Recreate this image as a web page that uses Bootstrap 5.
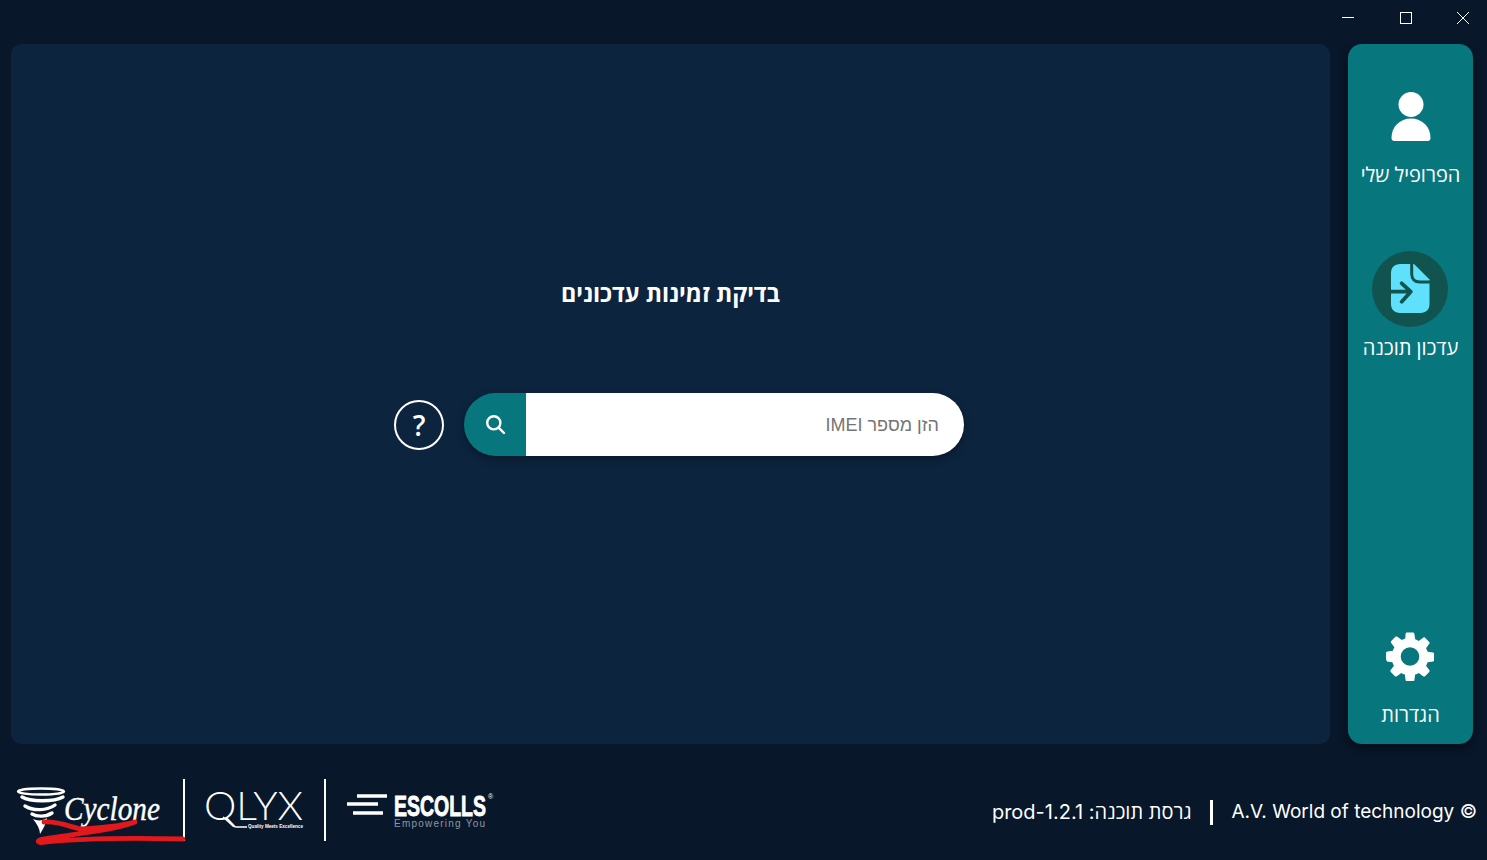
<!DOCTYPE html>
<html lang="he">
<head>
    <meta charset="UTF-8">
    <meta name="viewport" content="width=device-width, initial-scale=1.0">
    <title>Update check</title>
    <link href="https://cdn.jsdelivr.net/npm/bootstrap@5.3.0/dist/css/bootstrap.min.css" rel="stylesheet">
    <style>
        body {
            background-color: #08172a;
            color: #fff;
            font-family: "Open Sans", "Noto Sans", sans-serif;
            overflow: hidden;
        }
        .app-shell { height: 860px; }

        /* window controls */
        .title-bar { height: 44px; padding-right: 1px; gap: 11.5px; }
        .win-btn { width: 46px; height: 36px; }

        /* main area */
        .work-area { height: 700px; padding: 0 14px 0 11px; gap: 18px; }
        .main-panel {
            flex: 1;
            background-color: #0d243f;
            border-radius: 10px;
            padding-top: 234px;
        }
        .panel-title { font-size: 23.3px; font-weight: 700; line-height: 30px; margin-bottom: 85px; }
        .search-row { gap: 20px; margin-left: 17px; }
        .help-btn {
            width: 50px;
            height: 50px;
            border: 2px solid #fff;
            border-radius: 50%;
            font-size: 28px;
            font-weight: 600;
            line-height: 1;
        }
        .imei-group {
            width: 500px;
            height: 63px;
            border-radius: 32px;
            overflow: hidden;
            box-shadow: 0 3px 8px rgba(0, 0, 0, .35);
        }
        .imei-btn { width: 62px; background-color: #07777d; border: 0; border-radius: 0; }
        .imei-input {
            border: 0;
            border-radius: 0;
            padding-top: 8px;
            padding-right: 25px;
            font-family: "Liberation Sans", sans-serif;
            font-size: 18px;
            box-shadow: none;
        }
        .imei-input::placeholder { color: #757575; }

        /* side menu */
        .side-menu {
            width: 125px;
            background-color: #07777d;
            border-radius: 14px;
            box-shadow: 0 4px 10px rgba(0, 0, 0, .45);
            padding: 48px 0 16px;
        }
        .side-link {
            color: #fff;
            font-size: 20px;
            font-weight: 500;
            line-height: 26px;
            text-decoration: none;
            white-space: nowrap;
        }
        .side-link:hover { color: #fff; }
        .side-icon { height: 49px; margin-bottom: 21px; }
        .side-active { margin-top: 63px; }
        .active-ring {
            width: 76px;
            height: 76px;
            border-radius: 50%;
            background-color: #10534f;
            margin-bottom: 8px;
        }

        /* footer */
        .app-footer { height: 116px; padding: 16px 10px 0 15px; }
        .footer-rule { width: 2px; height: 62px; background-color: #fff; }
        .cyclone-logo { position: relative; z-index: 1; overflow: visible; }
        .logo-box { overflow: visible; }
        .version-text { font-family: Inter, "Open Sans", sans-serif; font-size: 19px; white-space: nowrap; margin-top: 4px; }
        .version-hebrew { font-size: 20px; }
        .version-rule { width: 3px; height: 25px; background-color: #fff; margin: 0 19px 0 18px; }
        .logo-text { fill: #fff; }
    </style>
</head>
<body>
    <div class="app-shell d-flex flex-column">

        <div class="title-bar d-flex justify-content-end align-items-start">
            <div class="win-btn d-flex align-items-center justify-content-center">
                <svg width="12" height="12" viewBox="0 0 12 12"><path d="M0 5.500h12" stroke="#fff" fill="none"/></svg>
            </div>
            <div class="win-btn d-flex align-items-center justify-content-center">
                <svg width="12" height="12" viewBox="0 0 12 12"><rect x=".5" y=".5" width="11" height="11" stroke="#fff" fill="none"/></svg>
            </div>
            <div class="win-btn d-flex align-items-center justify-content-center">
                <svg width="12" height="12" viewBox="0 0 12 12"><path d="M0 0l12 12M12 0L0 12" stroke="#fff" fill="none"/></svg>
            </div>
        </div>

        <div class="work-area d-flex">
            <main class="main-panel d-flex flex-column align-items-center">
                <h1 class="panel-title" dir="rtl">בדיקת זמינות עדכונים</h1>
                <div class="search-row d-flex align-items-center">
                    <div class="help-btn d-flex align-items-center justify-content-center">?</div>
                    <div class="imei-group input-group flex-nowrap">
                        <button class="imei-btn btn d-flex align-items-center justify-content-center" type="button" aria-label="search">
                            <svg width="21" height="21" viewBox="0 0 21 21" fill="none" stroke="#fff" stroke-width="2.400" stroke-linecap="round"><circle cx="8.800" cy="8.800" r="6.600"/><path d="M13.800 13.800l5.200 5.200"/></svg>
                        </button>
                        <input class="imei-input form-control h-100" type="text" dir="rtl" placeholder="הזן מספר IMEI">
                    </div>
                </div>
            </main>

            <nav class="side-menu d-flex flex-column align-items-center">
                <a class="side-link d-flex flex-column align-items-center" href="#">
                    <svg class="side-icon" width="40" height="49" viewBox="0 0 40 49" fill="#fff"><circle cx="20" cy="12.500" r="12.500"/><path d="M.5 46c0-11.500 8.500-19.500 19.500-19.500S39.500 34.500 39.500 46c0 1.700-1 3-3 3h-33c-2 0-3-1.300-3-3z"/></svg>
                    <span dir="rtl">הפרופיל שלי</span>
                </a>
                <a class="side-link side-active d-flex flex-column align-items-center" href="#">
                    <span class="active-ring d-flex align-items-center justify-content-center">
                        <svg width="40" height="50" viewBox="-1 0 40 50"><path d="M9 0H23L38.500 15.500V40c0 5.500-3.500 9-9 9H9c-5.500 0-9-3.500-9-9V9C0 3.500 3.500 0 9 0z" fill="#5fe0fb"/><path d="M20.700 0V10c0 5 3 8 8 8H40" fill="none" stroke="#10534f" stroke-width="3"/><path d="M-1 27.700H18M10.700 19.300l9 8.400-9 10" fill="none" stroke="#10534f" stroke-width="3.800" stroke-linecap="round" stroke-linejoin="round"/></svg>
                    </span>
                    <span dir="rtl">עדכון תוכנה</span>
                </a>
                <a class="side-link d-flex flex-column align-items-center mt-auto" href="#">
                    <svg class="side-icon" width="48" height="49" viewBox="0 0 49 49"><path fill="#fff" fill-rule="evenodd" d="M20 1.500c0-1 .8-1.500 1.500-1.500h6c.8 0 1.500.6 1.500 1.500l.8 5.500c1.300.4 2.500.9 3.600 1.600l4.500-3.300c.6-.5 1.500-.4 2 .1l4.200 4.200c.5.500.6 1.400.1 2l-3.300 4.500c.7 1.100 1.200 2.300 1.600 3.600l5.500.8c.9.100 1.500.7 1.500 1.500v6c0 .8-.6 1.400-1.500 1.500l-5.500.8c-.4 1.300-.9 2.500-1.600 3.600l3.300 4.500c.5.600.4 1.500-.1 2l-4.200 4.200c-.5.500-1.400.6-2 .1l-4.500-3.300c-1.100.7-2.300 1.200-3.600 1.600l-.8 5.500c-.1.900-.7 1.500-1.500 1.500h-6c-.8 0-1.400-.6-1.500-1.500l-.8-5.500c-1.300-.4-2.500-.9-3.600-1.600l-4.500 3.300c-.6.500-1.500.4-2-.1l-4.200-4.200c-.5-.5-.6-1.400-.1-2l3.300-4.500c-.7-1.100-1.200-2.300-1.600-3.600l-5.500-.8C.6 28.400 0 27.800 0 27v-6c0-.8.6-1.400 1.500-1.500l5.500-.8c.4-1.300.9-2.500 1.600-3.600L5.300 10.600c-.5-.6-.4-1.500.1-2l4.200-4.200c.5-.5 1.400-.6 2-.1l4.500 3.300c1.100-.7 2.300-1.200 3.600-1.600zM24.500 15a9.500 9.500 0 1 0 0 19 9.500 9.500 0 0 0 0-19z"/></svg>
                    <span dir="rtl">הגדרות</span>
                </a>
            </nav>
        </div>

        <footer class="app-footer d-flex align-items-center justify-content-between">
            <div class="d-flex align-items-center">
                <svg class="cyclone-logo" width="168" height="72" viewBox="15 774 168 72">
                    <g fill="none" stroke="#fff">
                        <ellipse cx="41" cy="791.500" rx="23" ry="3" stroke-width="2.400"/>
                        <path d="M22 797c8 5 32 5 41 0M25 806c8 5 22 5 30-1M32 814c5 3 14 3 20-1" stroke-width="3.400" stroke-linecap="round"/>
                    </g>
                    <path d="M33 819c4 2 10 2 14-1-1 6-4 11-7 16 0-5-3-10-7-15z" fill="#fff"/>
                    <text class="logo-text" x="64" y="820" stroke="#fff" stroke-width=".4" font-family="Liberation Serif, serif" font-style="italic" font-size="33" textLength="96" lengthAdjust="spacingAndGlyphs">Cyclone</text>
                    <path d="M44 822c14-1 24 4 36 7 20-1 40-3 55-7-20 8-60 12-92 17-7 1-6 5 2 3 40-4 95-4 138-3" fill="none" stroke="#e2191c" stroke-width="4.800" stroke-linecap="round" stroke-linejoin="round"/>
                </svg>
                <div class="footer-rule"></div>
                <svg class="logo-box ms-3 me-3" width="107" height="42" viewBox="0 0 107 42">
                    <text class="logo-text" x="3" y="31" font-family="Lato, sans-serif" font-weight="300" font-size="40" textLength="99" lengthAdjust="spacingAndGlyphs">QLYX</text>
                    <path d="M22 28l9 8c1 2 3 2 5 2h10" fill="none" stroke="#fff" stroke-width="1.500"/>
                    <text class="logo-text" x="47" y="39" font-family="Liberation Sans, sans-serif" font-weight="700" font-size="5" textLength="55" lengthAdjust="spacingAndGlyphs">Quality Meets Excellence</text>
                </svg>
                <div class="footer-rule"></div>
                <svg class="logo-box ms-3" width="156" height="42" viewBox="0 0 156 42">
                    <path d="M15 7h30M5 15h31M11 24h30" stroke="#fff" stroke-width="3.600"/>
                    <text class="logo-text" x="52" y="27" stroke="#fff" stroke-width=".9" font-family="Liberation Sans, sans-serif" font-weight="700" font-size="30" textLength="92" lengthAdjust="spacingAndGlyphs">ESCOLLS</text>
                    <text class="logo-text" x="146" y="10" font-family="Liberation Sans, sans-serif" font-size="7">®</text>
                    <text x="52" y="38" fill="#8d97a3" font-family="Liberation Sans, sans-serif" font-size="10" textLength="91">Empowering You</text>
                </svg>
            </div>
            <div class="version-text d-flex align-items-center">
                <span class="version-hebrew" dir="rtl">גרסת תוכנה: prod-1.2.1</span>
                <span class="version-rule"></span>
                <span dir="rtl">© A.V. World of technology</span>
            </div>
        </footer>
    </div>
    <script src="https://cdn.jsdelivr.net/npm/bootstrap@5.3.0/dist/js/bootstrap.bundle.min.js"></script>
</body>
</html>
